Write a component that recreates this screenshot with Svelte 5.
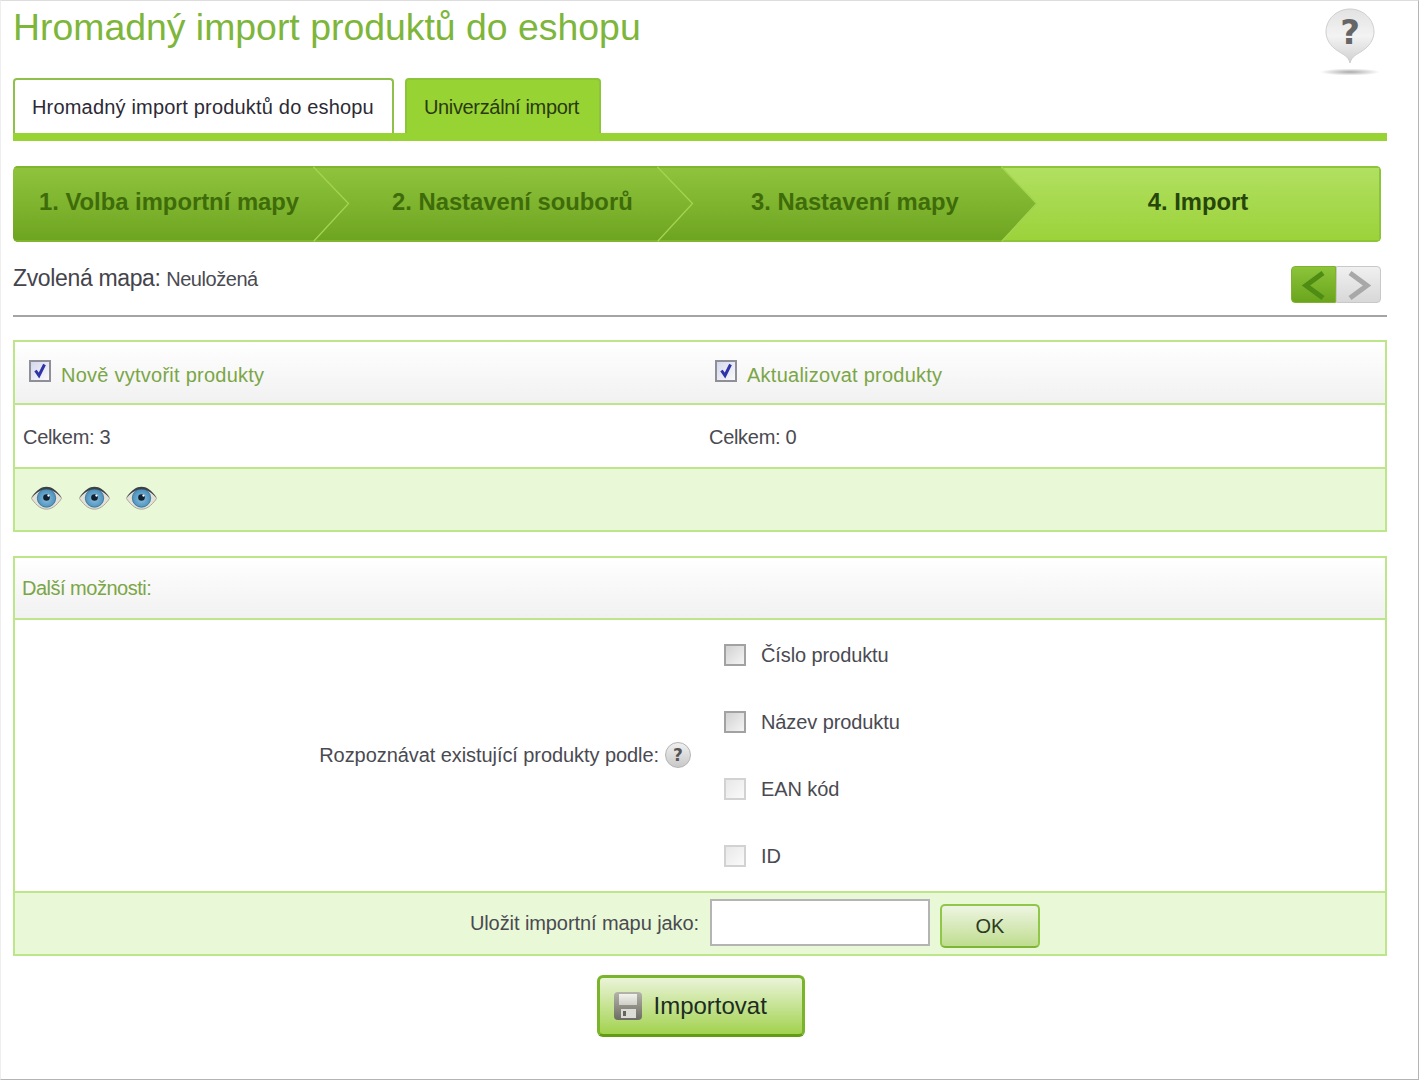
<script>
  const steps = [
    { label: '1. Volba importní mapy', pad: 26 },
    { label: '2. Nastavení souborů', pad: 79 },
    { label: '3. Nastavení mapy', pad: 94 },
    { label: '4. Import', pad: 0, active: true }
  ];
  const matchers = [
    { label: 'Číslo produktu', dark: true },
    { label: 'Název produktu', dark: true },
    { label: 'EAN kód', dark: false },
    { label: 'ID', dark: false }
  ];
</script>

{#snippet eye()}
  <svg class="eye" width="33" height="26" viewBox="0 0 34 26" aria-hidden="true">
    <defs>
      <radialGradient id="iris" cx="0.5" cy="0.55" r="0.6">
        <stop offset="0" stop-color="#8cc0de"/>
        <stop offset="1" stop-color="#3f86b4"/>
      </radialGradient>
    </defs>
    <path d="M1.5 13.5C7 5 12 2.500 17 2.500S27 5 32.500 13.500C27 21.500 22 24.500 17 24.500S7 21.500 1.500 13.500Z" fill="#e4e1d6" stroke="#aaa79a" stroke-width="1"/>
    <circle cx="17" cy="13" r="9.500" fill="url(#iris)"/>
    <circle cx="17" cy="13" r="9.500" fill="none" stroke="#2f6f9a" stroke-width="0.800"/>
    <path d="M1 13C7 4.500 12 1.500 17 1.500S27 4.500 33 13C27 7 22 4 17 4S7 7 1 13Z" fill="#3a4248"/>
    <circle cx="17" cy="12.500" r="3.400" fill="#10222f"/>
    <circle cx="19" cy="10.500" r="1.200" fill="#fff"/>
  </svg>
{/snippet}

{#snippet check()}
  <svg class="tick" width="16" height="16" viewBox="0 0 16 16" aria-hidden="true">
    <path d="M3.500 7.500L7 12.500L12.500 1.500" fill="none" stroke="#2f33a8" stroke-width="3"/>
  </svg>
{/snippet}

<div class="page">
  <header class="top">
    <h1>Hromadný import produktů do eshopu</h1>
    <svg class="helpbubble" width="66" height="72" viewBox="0 0 66 72" aria-hidden="true">
      <defs>
        <linearGradient id="hb" x1="0" y1="0" x2="0" y2="1">
          <stop offset="0" stop-color="#e2e2e2"/>
          <stop offset="0.5" stop-color="#f3f3f3"/>
          <stop offset="1" stop-color="#d0d0d0"/>
        </linearGradient>
        <radialGradient id="hs">
          <stop offset="0" stop-color="#aaa"/>
          <stop offset="1" stop-color="#fff"/>
        </radialGradient>
      </defs>
      <ellipse cx="33" cy="66" rx="30" ry="3.500" fill="url(#hs)"/>
      <path d="M33 57C31 50 27 49 21 45C13.500 40.500 9 33 9 26C9 13 20 3 33 3S57 13 57 26C57 33 52.500 40.500 45 45C39 49 35 50 33 57Z" fill="url(#hb)" stroke="#cfcfcf"/>
      <text x="33" y="38" text-anchor="middle" class="qm">?</text>
    </svg>
  </header>

  <nav class="tabs">
    <div class="tab">Hromadný import produktů do eshopu</div>
    <div class="tab current">Univerzální import</div>
  </nav>

  <div class="steps">
    {#each steps as s, i}
      <div class="step" class:active={s.active} style={s.active ? '' : `padding-left:${s.pad}px`}>
        <span>{s.label}</span>
        {#if i < 3}
          <svg class="arrow" width="37" height="76" viewBox="0 0 37 76" preserveAspectRatio="none" aria-hidden="true">
            <defs>
              <linearGradient id={`ar${i}`} x1="0" y1="0" x2="0" y2="1">
                <stop offset="0" stop-color="#90c43e"/>
                <stop offset="1" stop-color="#6da41f"/>
              </linearGradient>
            </defs>
            <path d="M0 0L36 37.500L0 76Z" fill={`url(#ar${i})`}/>
            <path d="M0.500 1L35.500 37.500L0.500 75.500" fill="none" stroke="#a4d452" stroke-width="1.300"/>
          </svg>
        {/if}
      </div>
    {/each}
  </div>

  <div class="mapline">
    <div class="maptext"><span class="mapname">Zvolená mapa:</span> <span class="mapval">Neuložená</span></div>
    <div class="pager">
      <span class="pg prev"><svg width="44" height="37" viewBox="0 0 44 37" aria-hidden="true"><path d="M31 6L14 18.500L31 31" fill="none" stroke="#4f8c14" stroke-width="5"/></svg></span>
      <span class="pg next"><svg width="44" height="37" viewBox="0 0 44 37" aria-hidden="true"><path d="M13 6L30 18.500L13 31" fill="none" stroke="#a8a8a8" stroke-width="5"/></svg></span>
    </div>
  </div>

  <section class="panel first">
    <div class="row head two checks">
      <label class="chk"><span class="box on">{@render check()}</span><span>Nově vytvořit produkty</span></label>
      <label class="chk"><span class="box on">{@render check()}</span><span>Aktualizovat produkty</span></label>
    </div>
    <div class="row two plain">
      <div>Celkem: 3</div>
      <div>Celkem: 0</div>
    </div>
    <div class="row tint eyes">
      {@render eye()}{@render eye()}{@render eye()}
    </div>
  </section>

  <section class="panel second">
    <div class="row head greenlabel">Další možnosti:</div>
    <div class="options">
      <div class="optlabel">
        <span>Rozpoznávat existující produkty podle:</span>
        <span class="qbadge">?</span>
      </div>
      <ul class="optlist">
        {#each matchers as m}
          <li><span class="box" class:dark={m.dark}></span><span>{m.label}</span></li>
        {/each}
      </ul>
    </div>
    <div class="row tint savebar">
      <span class="savelabel">Uložit importní mapu jako:</span>
      <input type="text" />
      <button class="ok" type="button">OK</button>
    </div>
  </section>

  <div class="actions">
    <button class="import" type="button">
      <svg width="30" height="30" viewBox="0 0 30 30" aria-hidden="true">
        <defs>
          <linearGradient id="fl" x1="0" y1="0" x2="0" y2="1">
            <stop offset="0" stop-color="#b4b4aa"/>
            <stop offset="1" stop-color="#6c6c64"/>
          </linearGradient>
          <linearGradient id="flw" x1="0" y1="0" x2="0" y2="1">
            <stop offset="0" stop-color="#f2f2ee"/>
            <stop offset="1" stop-color="#cfcfc8"/>
          </linearGradient>
        </defs>
        <rect x="1" y="1" width="28" height="28" rx="4" fill="url(#fl)"/>
        <rect x="6" y="3" width="18" height="11" fill="url(#flw)"/>
        <rect x="8" y="18" width="15" height="9" fill="#dcdcd6"/>
        <rect x="10" y="20" width="3" height="5" fill="#66665e"/>
      </svg>
      <span>Importovat</span>
    </button>
  </div>
</div>

<style>
  :global(body) {
    margin: 0;
    background: #fff;
  }
  .page {
    box-sizing: border-box;
    width: 1419px;
    height: 1080px;
    border: 1px solid #b4b4b4;
    border-top-color: #ddd;
    border-left-color: #eee;
    padding: 0 31px 0 12px;
    font-family: "Liberation Sans", "Noto Sans", sans-serif;
    font-size: 20px;
    color: #4a4a52;
    overflow: hidden;
  }
  .top {
    display: flex;
    justify-content: space-between;
    height: 77px;
    position: relative;
  }
  h1 {
    margin: 0;
    font-size: 37.4px;
    line-height: 52px;
    font-weight: 400;
    color: #7db63a;
    white-space: nowrap;
  }
  .helpbubble {
    position: absolute;
    right: 4px;
    top: 5px;
  }
  .qm {
    font: 700 34px "DejaVu Sans", sans-serif;
    fill: #666;
  }
  .tabs {
    display: flex;
    gap: 11px;
    border-bottom: 8px solid #98d334;
    height: 55px;
  }
  .tab {
    box-sizing: border-box;
    height: 55px;
    padding: 0 18px 0 17px;
    line-height: 54px;
    letter-spacing: 0.18px;
    border: 2px solid #8fc04a;
    border-bottom: 0;
    border-radius: 4px 4px 0 0;
    color: #2c2a36;
    background: #fff;
    white-space: nowrap;
  }
  .tab.current {
    letter-spacing: -0.33px;
    padding: 0 20px 0 17px;
    background: #98d334;
    border-color: #8cc43a;
    color: #2a3a10;
  }
  .steps {
    display: flex;
    height: 76px;
    width: 1368px;
    margin-top: 25px;
    border-radius: 5px;
    overflow: hidden;
  }
  .step {
    position: relative;
    box-sizing: border-box;
    flex: 0 0 300px;
    margin-right: 44px;
    height: 76px;
    line-height: 71px;
    font-family: "Liberation Sans", "DejaVu Sans", sans-serif;
    font-size: 23.8px;
    font-weight: 700;
    color: #3f6c0a;
    background: linear-gradient(#90c43e, #6da41f);
    box-shadow: inset 0 2px 0 #80b62f, inset 0 -2px 0 #80b62f;
    white-space: nowrap;
  }
  .step:nth-child(2),
  .step:nth-child(3) {
    margin-left: -44px;
    flex-basis: 344px;
    margin-right: 44px;
  }
  .step.active {
    flex: 1;
    margin-left: -44px;
    margin-right: 0;
    padding-left: 14px;
    text-align: center;
    color: #27470a;
    background: linear-gradient(#b2e062, #9bd239);
    box-shadow: inset 0 2px 0 #8cc43a, inset 0 -2px 0 #8cc43a, inset -2px 0 0 #8cc43a;
  }
  .arrow {
    position: absolute;
    left: 100%;
    top: 0;
    z-index: 1;
  }
  .mapline {
    display: flex;
    justify-content: space-between;
    align-items: center;
    height: 73px;
    border-bottom: 2px solid #a4a4a4;
    width: 1374px;
    box-sizing: content-box;
  }
  .maptext {
    margin-top: 0;
  }
  .mapname { font-size: 23px; letter-spacing: -0.35px; color: #44444c; }
  .mapval { font-size: 20px; letter-spacing: -0.45px; }
  .pager {
    display: flex;
    margin-right: 6px;
    margin-top: 11px;
  }
  .pg {
    display: block;
    box-sizing: border-box;
    width: 45px;
    height: 37px;
    border-radius: 4px 0 0 4px;
    overflow: hidden;
  }
  .pg svg { display: block; }
  .prev { background: linear-gradient(#8cc43a, #6aa51d); border: 1px solid #7fb32f; }
  .next { background: linear-gradient(#f0f0f0, #d8d8d8); border: 1px solid #c8c8c8; border-radius: 0 4px 4px 0; }
  .panel {
    box-sizing: border-box;
    width: 1374px;
    border: 2px solid #bde58a;
  }
  .first { margin-top: 23px; }
  .second { margin-top: 24px; }
  .row {
    box-sizing: border-box;
    height: 63px;
    display: flex;
    align-items: center;
    padding: 0 8px;
  }
  .two {
    display: grid;
    grid-template-columns: 686px 1fr;
  }
  .head {
    background: linear-gradient(#fff, #f1f1f1);
    border-bottom: 2px solid #bde58a;
  }
  .checks {
    padding-top: 6px;
  }
  .plain {
    height: 64px;
    padding-top: 3px;
    border-bottom: 2px solid #bde58a;
    letter-spacing: -0.3px;
  }
  .tint { background: #e9f8d6; }
  .chk {
    display: flex;
    align-items: center;
    gap: 10px;
    color: #7ba646;
    padding-left: 6px;
    letter-spacing: 0.25px;
  }
  .box {
    position: relative;
    display: block;
    flex: none;
    box-sizing: border-box;
    width: 22px;
    height: 22px;
    border: 2px solid #d2d2d2;
    background: linear-gradient(135deg, #e8e8e8, #fafafa);
  }
  .box.on {
    border-color: #8f8f98;
    background: linear-gradient(135deg, #d5d8ee, #fafafa);
    margin-top: -10px;
  }
  .box.dark {
    border-color: #a2a2a2;
    background: linear-gradient(135deg, #d2d2d2, #f4f4f4);
  }
  .tick {
    position: absolute;
    left: 1px;
    top: 1px;
  }
  .eyes {
    height: 61px;
    gap: 14.5px;
    padding-left: 15px;
    padding-bottom: 3px;
  }
  .eye { display: block; }
  .greenlabel {
    height: 62px;
    padding-left: 7px;
    letter-spacing: -0.5px;
    color: #7ba646;
  }
  .options {
    display: grid;
    grid-template-columns: 676px 1fr;
    height: 271px;
    align-items: center;
  }
  .optlabel {
    display: flex;
    justify-content: flex-end;
    align-items: center;
    gap: 6px;
    margin-top: -1px;
    letter-spacing: -0.07px;
  }
  .qbadge {
    display: block;
    box-sizing: border-box;
    width: 26px;
    height: 26px;
    border-radius: 50%;
    text-align: center;
    font: 700 17px/25px "DejaVu Sans", sans-serif;
    color: #555;
    background: linear-gradient(#f0f0f0, #c8c8c8);
    border: 1px solid #b4b4b4;
  }
  .optlist {
    list-style: none;
    margin: 0;
    padding: 0 0 0 33px;
    display: flex;
    flex-direction: column;
  }
  .optlist li {
    display: flex;
    align-items: center;
    gap: 15px;
    height: 67px;
    letter-spacing: -0.1px;
  }
  .savebar {
    display: grid;
    grid-template-columns: 684px 220px 100px;
    column-gap: 10.5px;
    align-items: center;
    border-top: 2px solid #bde58a;
    padding: 0;
    height: 63px;
  }
  .savelabel {
    text-align: right;
    letter-spacing: -0.08px;
  }
  .savebar input {
    box-sizing: border-box;
    width: 220px;
    height: 47px;
    border: 2px solid #b4b4b4;
    background: #fff;
    margin-top: -2px;
  }
  .ok {
    box-sizing: border-box;
    width: 100px;
    height: 44px;
    margin-top: 5px;
    border: 2px solid #91c748;
    border-bottom-color: #7fb536;
    border-radius: 5px;
    background: linear-gradient(#eef5e2, #bfdd8f);
    font: inherit;
    color: #2d3a22;
    padding: 0;
  }
  .actions {
    display: flex;
    justify-content: center;
    margin-top: 19px;
    width: 1375px;
  }
  .import {
    box-sizing: border-box;
    display: flex;
    align-items: center;
    gap: 11px;
    width: 208px;
    height: 62px;
    padding: 0 0 0 13px;
    border: 3px solid #7ab42a;
    border-bottom-color: #619c12;
    border-radius: 6px;
    background: linear-gradient(#eaf4d8, #a2d24e);
    font: inherit;
    font-size: 24px;
    color: #1d2c22;
  }
</style>
